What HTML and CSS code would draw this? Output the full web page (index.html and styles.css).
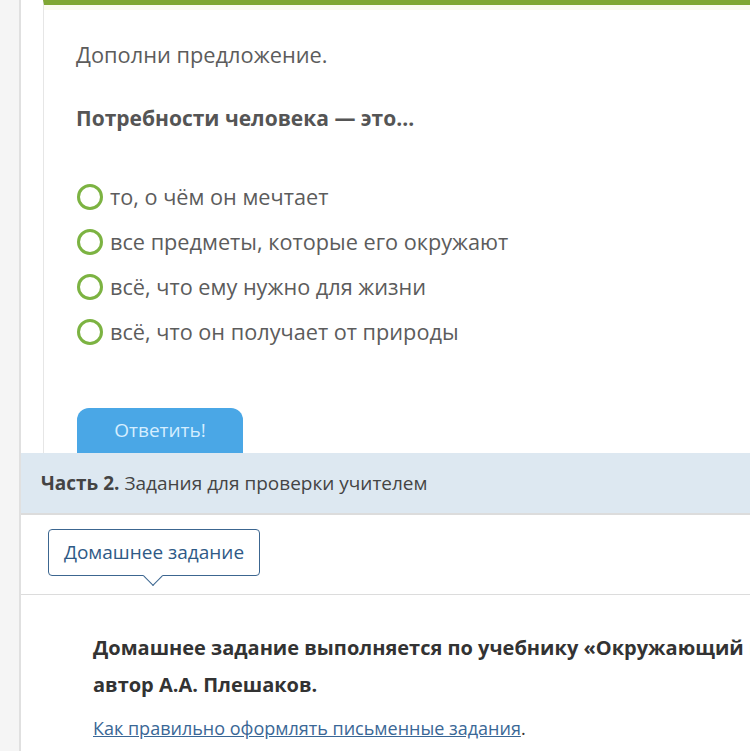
FILE: index.html
```html
<!DOCTYPE html>
<html lang="ru">
<head>
<meta charset="utf-8">
<link rel="stylesheet" href="styles.css">
</head>
<body>
<div class="page">
  <div class="card">
    <div class="card-strip"></div>
    <p class="task">Дополни предложение.</p>
    <p class="question">Потребности человека — это...</p>
    <ul class="options">
      <li class="option"><span class="radio"></span>то, о чём он мечтает</li>
      <li class="option"><span class="radio"></span>все предметы, которые его окружают</li>
      <li class="option"><span class="radio"></span>всё, что ему нужно для жизни</li>
      <li class="option"><span class="radio"></span>всё, что он получает от природы</li>
    </ul>
    <div class="btn-wrap"><button class="btn">Ответить!</button></div>
  </div>
  <div class="part"><b>Часть 2.</b> Задания для проверки учителем</div>
  <div class="tabs">
    <div class="tab">Домашнее задание</div>
  </div>
  <div class="hw">
    <p class="hw-title">Домашнее задание выполняется по учебнику «Окружающий мир», автор А.А. Плешаков.</p>
    <p class="hw-link"><a href="#">Как правильно оформлять письменные задания</a>.</p>
  </div>
</div>
</body>
</html>
```

FILE: styles.css
```css
html, body {
  margin: 0;
  padding: 0;
  background: #f5f5f5;
  overflow: hidden;
}
.page {
  margin-left: 19px;
  border-left: 2px solid #e0e0e0;
  background: #fff;
  min-height: 751px;
  width: 900px;
}
.card {
  margin-left: 22px;
  border-left: 1px solid #e6e6e6;
  border-top: 5px solid #80a733;
  padding-left: 32px;
}
.card-strip {
  height: 5px;
  margin-left: -32px;
  background: #fbfbef;
}
.task {
  margin: 0;
  padding-top: 30px;
  font-family: "Open Sans", sans-serif;
  font-size: 21.8px;
  line-height: 30px;
  color: #5c5c5c;
}
.question {
  margin: 33px 0 0;
  font-family: "Open Sans", sans-serif;
  font-weight: 700;
  font-size: 21px;
  line-height: 30px;
  color: #555;
}
.options {
  list-style: none;
  margin: 49px 0 0;
  padding: 0;
  display: flex;
  flex-direction: column;
  gap: 15px;
}
.option {
  display: flex;
  align-items: center;
  gap: 7px;
  font-family: "Open Sans", sans-serif;
  font-size: 21.7px;
  line-height: 30px;
  color: #5c5c5c;
  margin-left: 1px;
}
.radio {
  width: 20px;
  height: 20px;
  border: 3px solid #7cb342;
  border-radius: 50%;
  flex: none;
}
.btn-wrap {
  padding-top: 61px;
  height: 45px;
  overflow: hidden;
}
.btn {
  margin-left: 1px;
  width: 166px;
  height: 60px;
  border: none;
  border-radius: 12px;
  background: #4aa7e6;
  color: #d5eeff;
  font-family: "Open Sans", sans-serif;
  font-size: 19px;
  padding: 0 0 17px;
}
.part {
  height: 60px;
  background: #dde8f1;
  border-bottom: 2px solid #dcdcdc;
  padding-left: 20px;
  display: flex;
  align-items: center;
  font-family: "Open Sans", sans-serif;
  font-size: 19px;
  color: #444;
}
.part b {
  font-weight: 700;
  margin-right: 5px;
}
.tabs {
  height: 80px;
  border-bottom: 1px solid #dcdcdc;
  padding: 14px 0 0 27px;
  box-sizing: border-box;
}
.tab {
  position: relative;
  display: inline-block;
  box-sizing: border-box;
  height: 47px;
  width: 212px;
  border: 1px solid #3c6690;
  border-radius: 4px;
  text-align: center;
  line-height: 45px;
  font-family: "Open Sans", sans-serif;
  font-size: 19px;
  color: #2f5a86;
  background: #fff;
}
.tab::after {
  content: "";
  position: absolute;
  left: 97px;
  bottom: -8px;
  width: 13px;
  height: 13px;
  background: #fff;
  border-right: 1px solid #3c6690;
  border-bottom: 1px solid #3c6690;
  transform: rotate(45deg);
}
.hw {
  padding: 34px 0 0 72px;
  width: 730px;
}
.hw-title {
  margin: 0;
  font-family: "Open Sans", sans-serif;
  font-weight: 700;
  font-size: 20px;
  line-height: 37px;
  color: #333;
}
.hw-link {
  margin: 13px 0 0;
  font-family: "Open Sans", sans-serif;
  font-size: 18px;
  line-height: 24px;
  color: #333;
}
.hw-link a {
  color: #3a6796;
}
```
